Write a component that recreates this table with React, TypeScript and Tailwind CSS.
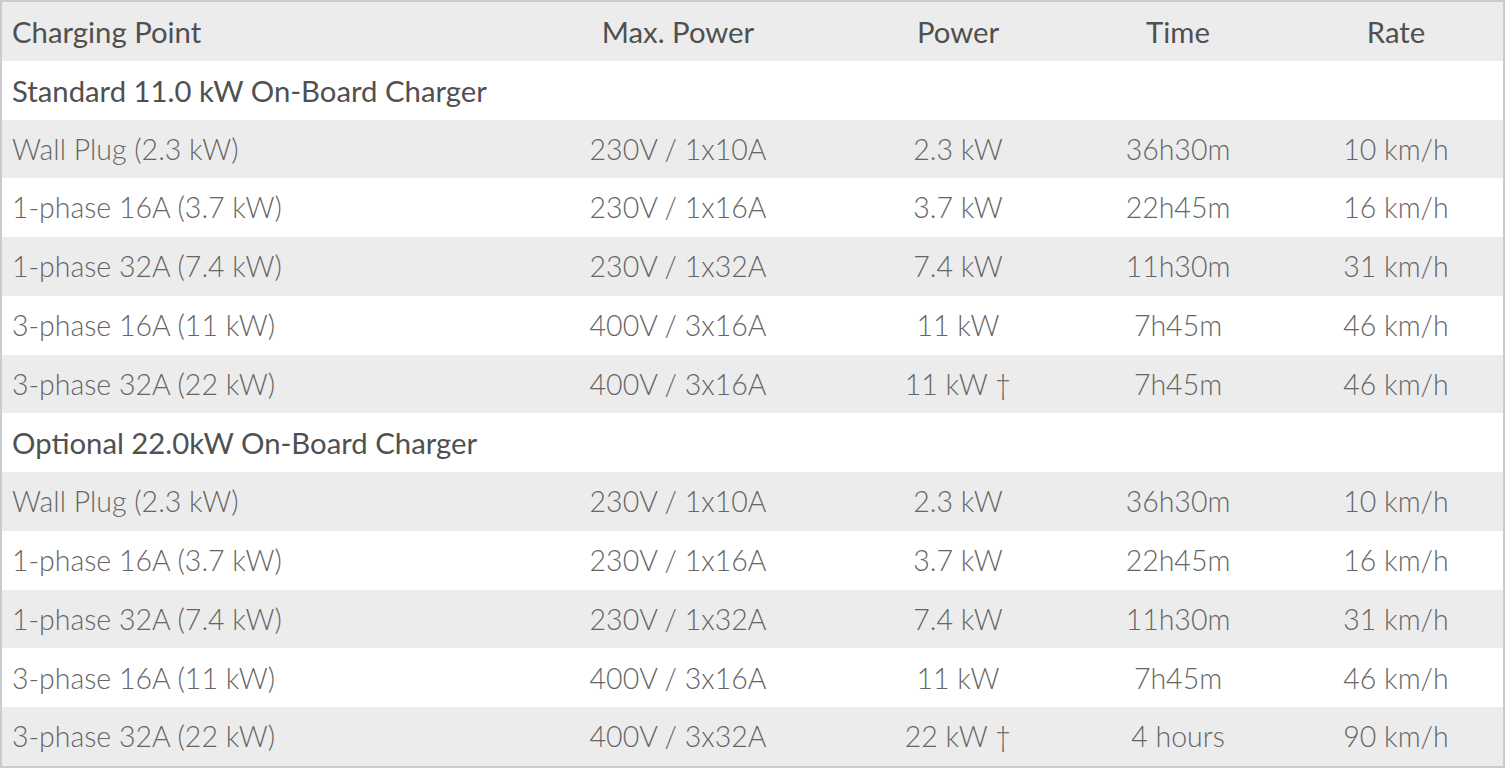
import React from "react";

type Row = { kind: "section"; title: string } | { kind: "data"; cells: string[] };

const rows: Row[] = [
  { kind: "section", title: "Standard 11.0 kW On-Board Charger" },
  { kind: "data", cells: ["Wall Plug (2.3 kW)", "230V / 1x10A", "2.3 kW", "36h30m", "10 km/h"] },
  { kind: "data", cells: ["1-phase 16A (3.7 kW)", "230V / 1x16A", "3.7 kW", "22h45m", "16 km/h"] },
  { kind: "data", cells: ["1-phase 32A (7.4 kW)", "230V / 1x32A", "7.4 kW", "11h30m", "31 km/h"] },
  { kind: "data", cells: ["3-phase 16A (11 kW)", "400V / 3x16A", "11 kW", "7h45m", "46 km/h"] },
  { kind: "data", cells: ["3-phase 32A (22 kW)", "400V / 3x16A", "11 kW \u2020", "7h45m", "46 km/h"] },
  { kind: "section", title: "Optional 22.0kW On-Board Charger" },
  { kind: "data", cells: ["Wall Plug (2.3 kW)", "230V / 1x10A", "2.3 kW", "36h30m", "10 km/h"] },
  { kind: "data", cells: ["1-phase 16A (3.7 kW)", "230V / 1x16A", "3.7 kW", "22h45m", "16 km/h"] },
  { kind: "data", cells: ["1-phase 32A (7.4 kW)", "230V / 1x32A", "7.4 kW", "11h30m", "31 km/h"] },
  { kind: "data", cells: ["3-phase 16A (11 kW)", "400V / 3x16A", "11 kW", "7h45m", "46 km/h"] },
  { kind: "data", cells: ["3-phase 32A (22 kW)", "400V / 3x32A", "22 kW \u2020", "4 hours", "90 km/h"] },
];

const grid = "grid grid-cols-[505px_342px_218px_222px_1fr] items-center";

export default function App() {
  return (
    <div
      className="w-[1505px] h-[768px] bg-white border-2 border-[#cbcbcb] flex flex-col text-[28.5px] leading-none"
      style={{ fontFamily: "Lato, 'Open Sans', sans-serif" }}
    >
      <div className={`${grid} flex-1 bg-[#ececec] text-[#505050] text-[29.3px]`}>
        <div className="pl-[10px]">Charging Point</div>
        <div className="text-center">Max. Power</div>
        <div className="text-center">Power</div>
        <div className="text-center">Time</div>
        <div className="text-center">Rate</div>
      </div>
      {rows.map((r, i) =>
        r.kind === "section" ? (
          <div
            key={i}
            className={`flex-1 flex items-center pl-[10px] text-[29.3px] text-[#505050] ${i % 2 === 1 ? "bg-[#ececec]" : "bg-white"}`}
          >
            {r.title}
          </div>
        ) : (
          <div
            key={i}
            className={`${grid} flex-1 font-light text-[#666666] ${i % 2 === 1 ? "bg-[#ececec]" : "bg-white"}`}
          >
            <div className="pl-[10px]">{r.cells[0]}</div>
            <div className="text-center">{r.cells[1]}</div>
            <div className="text-center">{r.cells[2]}</div>
            <div className="text-center">{r.cells[3]}</div>
            <div className="text-center">{r.cells[4]}</div>
          </div>
        )
      )}
    </div>
  );
}
